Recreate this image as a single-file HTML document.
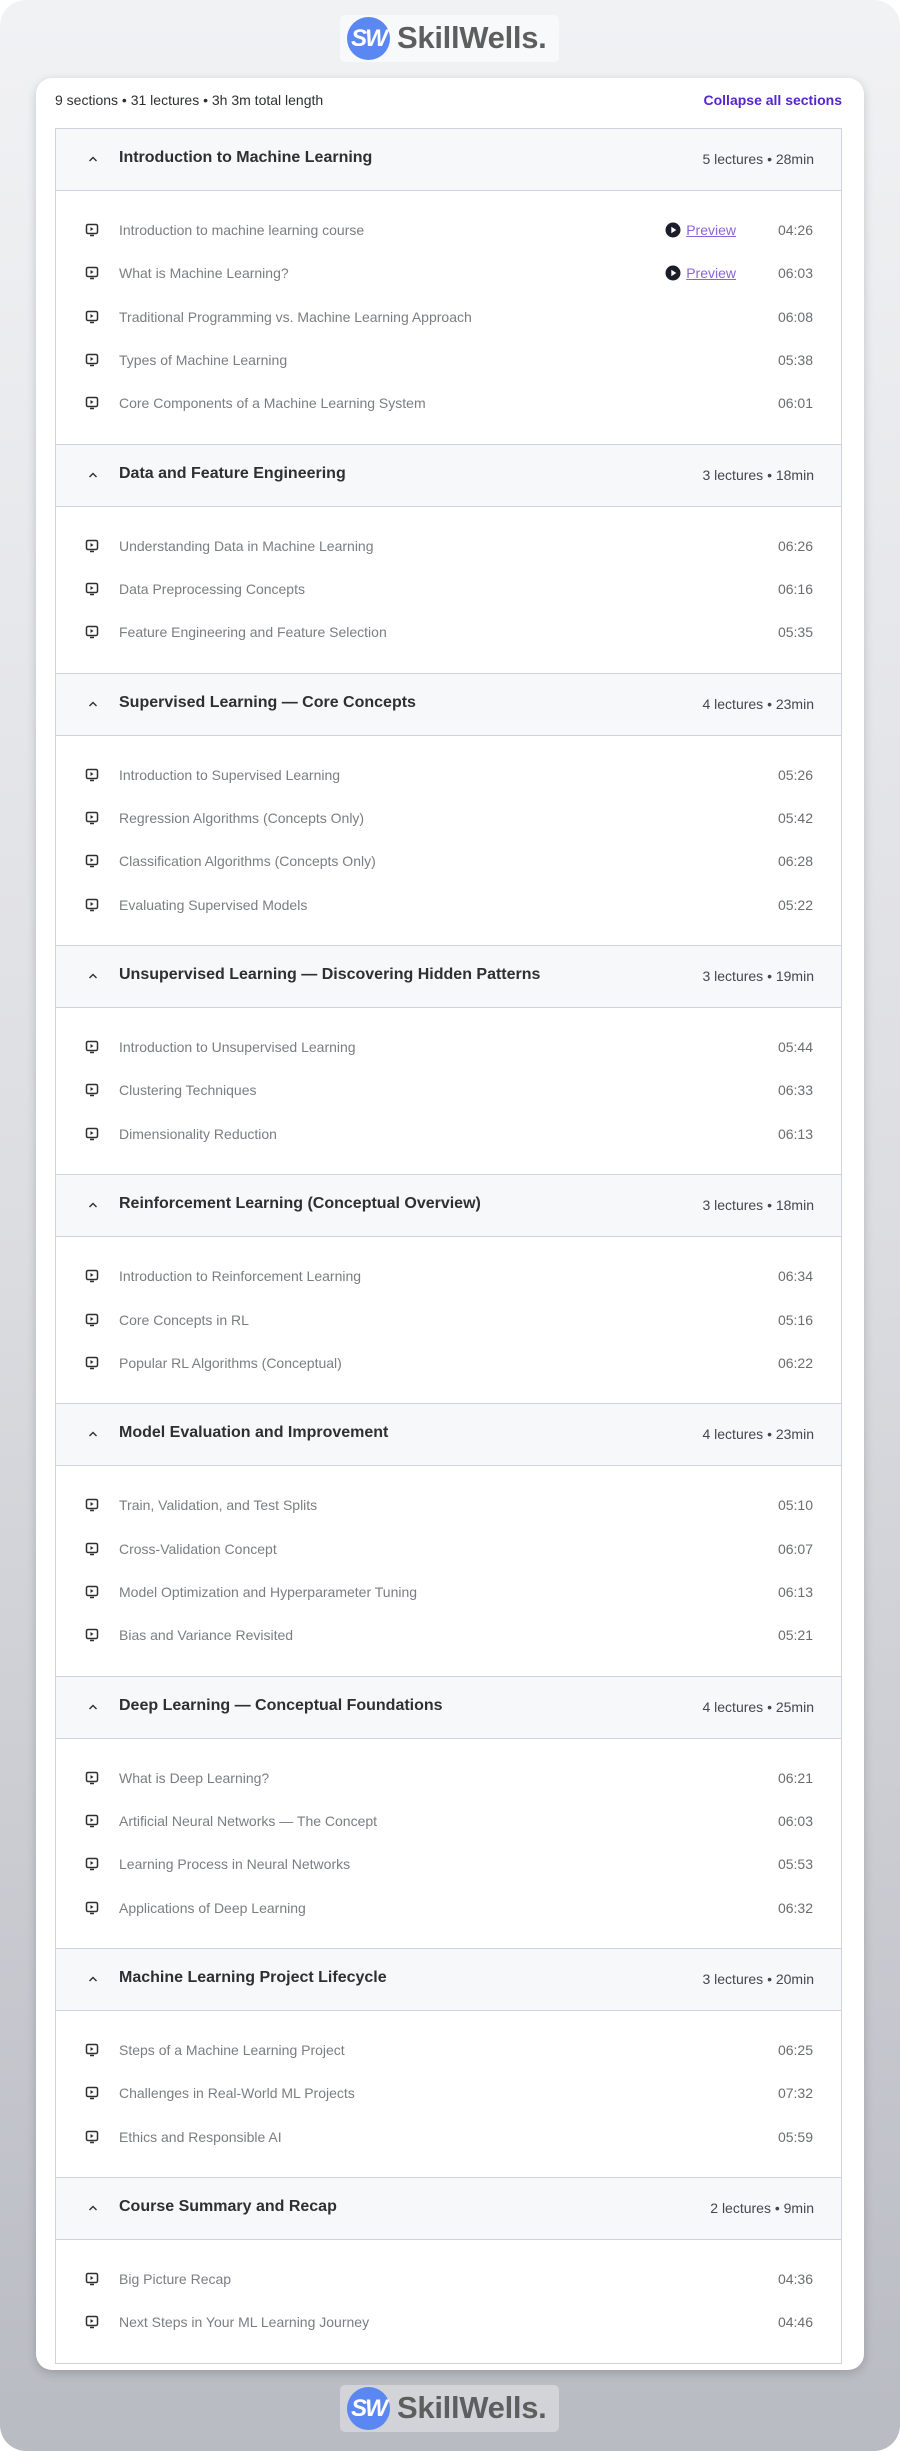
<!DOCTYPE html>
<html><head><meta charset="utf-8"><style>
*{box-sizing:border-box;margin:0;padding:0}
html,body{width:900px;height:2451px;background:#fff;overflow:hidden}
body{font-family:"Liberation Sans",sans-serif}
.frame{position:absolute;left:0;top:0;width:900px;height:2451px;border-radius:26px;background:linear-gradient(180deg,#f1f2f4 0%,#dcdde1 50%,#b9bbc3 100%)}
.logo{position:absolute;left:340px;width:219px;height:47px;border-radius:5px;background:rgba(255,255,255,.55)}
.logo .c{position:absolute;left:7px;top:2px;width:43px;height:43px;border-radius:50%;background:#5b87f2;color:#fff;font-weight:bold;font-size:24px;line-height:43px;text-align:center;letter-spacing:-2px;font-style:italic}
.logo .t{position:absolute;left:57px;top:5px;font-size:31px;font-weight:bold;color:#5e5e5e;letter-spacing:-.3px}
.card{position:absolute;left:36px;top:78px;width:828px;height:2292px;background:#fff;border-radius:16px;box-shadow:0 3px 10px rgba(0,0,0,.18)}
.top{position:absolute;left:19px;top:14px;right:22px;height:22px;font-size:14px;color:#2d2f31}
.top .r{position:absolute;right:0;top:0;color:#5624d0;font-weight:bold}
.list{position:absolute;left:19px;top:50px;width:787px;border:1px solid #d1d2e0;border-top:none}
.sh{height:63px;background:#f7f8fa;border-top:1px solid #d1d2e0;border-bottom:1px solid #d1d2e0;position:relative}
.sh svg{position:absolute;left:32px;top:26px}
.sh .ti{position:absolute;left:63px;top:20px;font-size:16px;font-weight:bold;color:#2d2f31}
.sh .m{position:absolute;right:27px;top:22px;font-size:14px;color:#44474a}
.bd{padding:18px 0}
.lr{height:43.35px;position:relative;font-size:14px;color:#7a7d82}
.lr svg.i{position:absolute;left:29px;top:14px}
.lr .n{position:absolute;left:63px;top:13px}
.lr .d{position:absolute;right:28px;top:13px;color:#6a6d70}
.lr .p{position:absolute;right:105px;top:13px;color:#8c63d8;text-decoration:underline}
.lr svg.pp{position:absolute;right:160px;top:13px}
</style></head><body>
<div class="frame"></div>
<div class="logo" style="top:15px"><div class="c">SW</div><div class="t">SkillWells.</div></div>
<div class="card">
<div class="top">9 sections • 31 lectures • 3h 3m total length<span class="r">Collapse all sections</span></div>
<div class="list" id="L"></div>
</div>
<div class="logo" style="top:2385px;background:rgba(255,255,255,.35)"><div class="c">SW</div><div class="t">SkillWells.</div></div>
<script>
var S=[["Introduction to Machine Learning","5 lectures • 28min",[["Introduction to machine learning course","04:26",1],["What is Machine Learning?","06:03",1],["Traditional Programming vs. Machine Learning Approach","06:08"],["Types of Machine Learning","05:38"],["Core Components of a Machine Learning System","06:01"]]],
["Data and Feature Engineering","3 lectures • 18min",[["Understanding Data in Machine Learning","06:26"],["Data Preprocessing Concepts","06:16"],["Feature Engineering and Feature Selection","05:35"]]],
["Supervised Learning — Core Concepts","4 lectures • 23min",[["Introduction to Supervised Learning","05:26"],["Regression Algorithms (Concepts Only)","05:42"],["Classification Algorithms (Concepts Only)","06:28"],["Evaluating Supervised Models","05:22"]]],
["Unsupervised Learning — Discovering Hidden Patterns","3 lectures • 19min",[["Introduction to Unsupervised Learning","05:44"],["Clustering Techniques","06:33"],["Dimensionality Reduction","06:13"]]],
["Reinforcement Learning (Conceptual Overview)","3 lectures • 18min",[["Introduction to Reinforcement Learning","06:34"],["Core Concepts in RL","05:16"],["Popular RL Algorithms (Conceptual)","06:22"]]],
["Model Evaluation and Improvement","4 lectures • 23min",[["Train, Validation, and Test Splits","05:10"],["Cross-Validation Concept","06:07"],["Model Optimization and Hyperparameter Tuning","06:13"],["Bias and Variance Revisited","05:21"]]],
["Deep Learning — Conceptual Foundations","4 lectures • 25min",[["What is Deep Learning?","06:21"],["Artificial Neural Networks — The Concept","06:03"],["Learning Process in Neural Networks","05:53"],["Applications of Deep Learning","06:32"]]],
["Machine Learning Project Lifecycle","3 lectures • 20min",[["Steps of a Machine Learning Project","06:25"],["Challenges in Real-World ML Projects","07:32"],["Ethics and Responsible AI","05:59"]]],
["Course Summary and Recap","2 lectures • 9min",[["Big Picture Recap","04:36"],["Next Steps in Your ML Learning Journey","04:46"]]]];
var ic='<svg class="i" width="14" height="14" viewBox="0 0 14 14"><rect x="1.5" y="1.5" width="11" height="9" rx="1.5" fill="none" stroke="#2d2f31" stroke-width="1.5"/><path d="M5.5 4v4l3-2z" fill="#2d2f31"/><path d="M5 12.5h4" stroke="#2d2f31" stroke-width="1.5"/></svg>';
var pp='<svg class="pp" width="16" height="16" viewBox="0 0 16 16"><circle cx="8" cy="8" r="7.5" fill="#1c1d2b"/><path d="M6.3 4.8v6.4l5-3.2z" fill="#fff"/></svg>';
var ch='<svg width="10" height="8" viewBox="0 0 10 8"><path d="M1.5 6L5 2.5 8.5 6" fill="none" stroke="#2d2f31" stroke-width="1.4"/></svg>';
var h='';S.forEach(function(s){h+='<div class="sh">'+ch+'<span class="ti">'+s[0]+'</span><span class="m">'+s[1]+'</span></div><div class="bd">';
s[2].forEach(function(l){h+='<div class="lr">'+ic+'<span class="n">'+l[0]+'</span>'+(l[2]?pp+'<span class="p">Preview</span>':'')+'<span class="d">'+l[1]+'</span></div>';});h+='</div>';});
document.getElementById('L').innerHTML=h;
</script>
</body></html>
